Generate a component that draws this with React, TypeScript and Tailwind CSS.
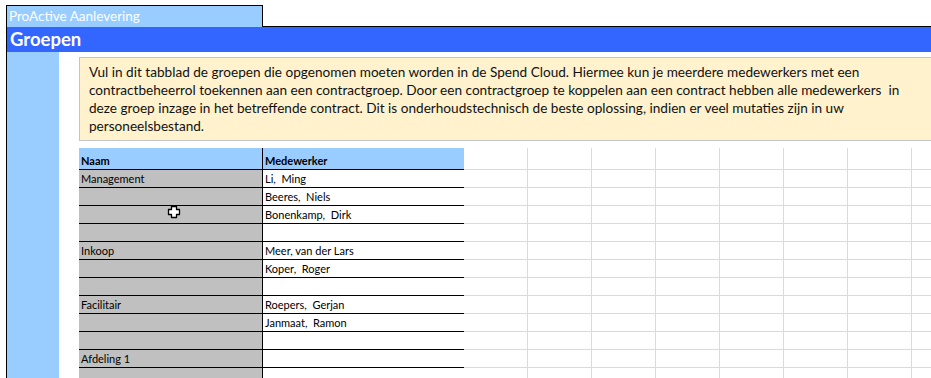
import React from "react"

const rows: [string, string][] = [
  ["Management", "Li,  Ming"],
  ["", "Beeres,  Niels"],
  ["", "Bonenkamp,  Dirk"],
  ["", ""],
  ["Inkoop", "Meer, van der Lars"],
  ["", "Koper,  Roger"],
  ["", ""],
  ["Facilitair", "Roepers,  Gerjan"],
  ["", "Janmaat,  Ramon"],
  ["", ""],
  ["Afdeling 1", ""],
  ["", ""],
]

const emptyCols = [0, 1, 2, 3, 4, 5, 6, 7]

function GridCells({ header }: { header?: boolean }) {
  return (
    <div className="flex shrink-0">
      {emptyCols.map((c) => (
        <div
          key={c}
          className={`w-[64px] shrink-0 border-r border-[#dadada] ${header ? "h-[21px]" : "h-[18px] border-b"}`}
        />
      ))}
    </div>
  )
}

export default function App() {
  return (
    <div
      className="relative w-[931px] h-[378px] overflow-hidden bg-white pl-[6px] pt-[5px]"
      style={{ fontFamily: "Lato, 'Open Sans', sans-serif" }}
    >
      <div className="flex flex-col h-full border-l border-black">
        {/* Tab */}
        <div className="flex h-[22px] shrink-0">
          <div className="w-[256px] h-[22px] bg-[#99ccff] border-t border-r border-black text-white text-[13.5px] leading-[20px] pl-[2px]">
            ProActive Aanlevering
          </div>
          <div className="flex-1 border-b border-black" />
        </div>

        {/* Title bar */}
        <div className="h-[25px] shrink-0 bg-[#3366ff] text-white font-bold text-[18.5px] leading-[25px] pl-[3px]">
          Groepen
        </div>

        <div className="flex flex-1 min-h-0">
          {/* Left band */}
          <div className="w-[52px] shrink-0 bg-[#99ccff]" />

          <div className="flex flex-col pl-[20px]">
            {/* Info box */}
            <div className="shrink-0 mt-[5px] w-[870px] h-[84px] bg-[#fff2cc] border border-[#c4c4c4] pl-[9px] pt-[5px] text-[13.6px] leading-[18px] text-[#111] whitespace-nowrap">
              Vul in dit tabblad de groepen die opgenomen moeten worden in de Spend Cloud. Hiermee kun je meerdere medewerkers met een
              <br />
              contractbeheerrol toekennen aan een contractgroep. Door een contractgroep te koppelen aan een contract hebben alle medewerkers&nbsp; in
              <br />
              deze groep inzage in het betreffende contract. Dit is onderhoudstechnisch de beste oplossing, indien er veel mutaties zijn in uw
              <br />
              personeelsbestand.
            </div>

            {/* Sheet */}
            <div className="shrink-0 mt-[7px] flex flex-col text-[11px] text-black">
              <div className="flex shrink-0 h-[22px] border-b border-[#dadada]">
                <div className="flex h-[22px] bg-[#99ccff] border-b border-black font-bold">
                  <div className="w-[184px] border-r border-black pl-[2px] pb-[1px] flex items-end leading-[14px]">Naam</div>
                  <div className="w-[201px] pl-[2px] pb-[1px] flex items-end leading-[14px]">Medewerker</div>
                </div>
                <GridCells header />
              </div>
              {rows.map(([naam, mw], i) => (
                <div key={i} className="flex shrink-0">
                  <div className="flex h-[18px] border-b border-black">
                    <div className="w-[184px] bg-[#c0c0c0] border-r border-black pl-[2px] leading-[17px] whitespace-pre">{naam}</div>
                    <div className="w-[201px] bg-white pl-[2px] leading-[17px] whitespace-pre">{mw}</div>
                  </div>
                  <GridCells />
                </div>
              ))}
            </div>
          </div>
        </div>
      </div>

      {/* Cell cursor */}
      <svg className="absolute left-[167px] top-[205px]" width="14" height="14" viewBox="0 0 14 14">
        <path
          d="M4.5 1.5h5v3h3v5h-3v3h-5v-3h-3v-5h3z"
          fill="#fff"
          stroke="#000"
          strokeWidth="1.3"
          strokeLinejoin="round"
        />
      </svg>
    </div>
  )
}
